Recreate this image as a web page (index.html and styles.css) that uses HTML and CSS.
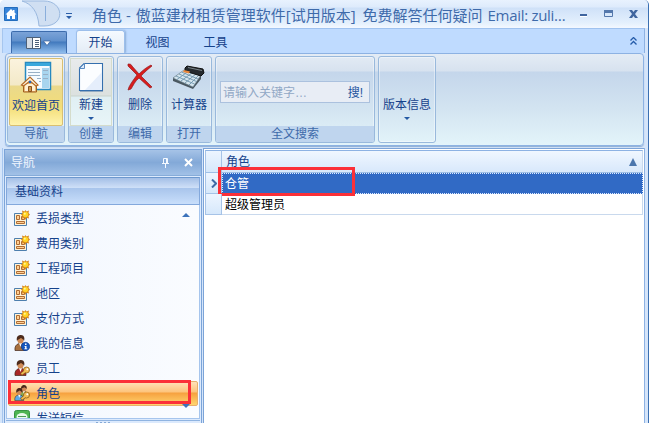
FILE: index.html
```html
<!DOCTYPE html>
<html lang="zh-CN">
<head>
    <meta charset="UTF-8">
    <title>角色</title>
    <link rel="stylesheet" href="styles.css">
</head>
<body>
    <!-- shared icons -->
    <svg class="defs">
        <symbol id="card" viewBox="0 0 16 16">
            <path fill="#fff3d6" stroke="#4d7fae" d="M.5 3.500h12v12H.5z"/>
            <path fill="#ffcf91" stroke="#b06c34" d="M2.500 5.500h3v4h-3zM7.500 6.500h3v3h-3z"/>
            <path fill="#ffcf91" stroke="#b06c34" d="M2.500 11.500h8v2h-8z"/>
            <path fill="#d98a1c" d="M11.500 0l1 1.500L15 .5l-.5 2.500L16 4.500l-1.500 1.500.5 2.500-2.500-.7L11.500 10l-1-2.200L8 8.500 8.500 6 7 4.500 8.500 3 8 .5l2.500 1z"/>
            <circle cx="11.500" cy="4.500" r="2.700" fill="#ffd322"/>
            <circle cx="10.800" cy="3.800" r="1" fill="#fff6a0"/>
        </symbol>
        <symbol id="person" viewBox="0 0 16 16">
            <path stroke="#40251a" stroke-width=".7" d="M1 15.500c-.5-4 1-6 4-7h3c3 1 4 3 4 7z"/>
            <path fill="#fff" d="M5 8l1.500 4L8 8z"/>
            <circle cx="6.500" cy="5.500" r="3" fill="#cf8a56"/>
            <path fill="#4b2a1c" d="M3 6C2 2 4 0 7 0s4 3 3 6C9.500 4 8 4 7 3 6 4 4 4 3 6z"/>
        </symbol>
        <symbol id="key" viewBox="0 0 16 16">
            <path fill="none" stroke="#8a5a18" stroke-width="3" d="M7 14.500l4-3"/>
            <circle cx="12.500" cy="10" r="3" fill="#f2bd56" stroke="#8a5a18" stroke-width=".8"/>
            <path stroke="#f2bd56" stroke-width="1.600" d="M7.500 14l4-3"/>
            <circle cx="13.300" cy="9.300" r="1" fill="#fff"/>
        </symbol>
    </svg>

    <div class="window">
        <div class="titlebar">
            <svg class="home" width="14" height="14" viewBox="0 0 14 14">
                <path fill="#3684da" stroke="#236dbd" d="M.5.500h13v13H.5z"/>
                <path fill="#fff" d="M7 2L1.500 7.500H3V12h3V9h2v3h3V7.500h1.500L10.500 5.500V3H9v1z"/>
            </svg>
            <svg class="quick" width="42" height="28" viewBox="0 0 42 28">
                <path class="quick-shape" d="M2 1h22c20 0 22 25 0 25h-5C18 12 12 4 2 1z"/>
                <path stroke="#8aaedb" d="M25.500 6v15"/>
            </svg>
            <svg class="quick-arrow" width="6" height="6" viewBox="0 0 6 6">
                <path fill="#2c5fa8" d="M0 0h6v1H0zM0 3h6L3 6z"/>
            </svg>
            <div class="caption"><span>角色 -</span><span class="app-name">傲蓝建材租赁管理软件[试用版本]</span><span class="answer">免费解答任何疑问</span><span class="email">Email: zuli…</span></div>
            <svg class="controls" width="60" height="12" viewBox="0 0 60 12">
                <path fill="#3f659f" d="M0 5h7v2H0z"/>
                <path fill="#fff" d="M0 7h7v1H0z"/>
                <path fill="none" stroke="#5478ac" d="M24.500 1.500h8v6h-8z"/>
                <path fill="#5478ac" d="M24 1h9v3h-9z"/>
                <path fill="#3f659f" d="M49 1h3l1.500 2L55 1h3l-3 4 3 4h-3l-1.500-2L52 9h-3l3-4z"/>
            </svg>
        </div>

        <div class="tabs">
            <div class="app-button">
                <svg width="26" height="12" viewBox="0 0 26 12">
                    <path fill="#fff" stroke="#4c6079" d="M.5.500h14v11H.5z"/>
                    <path fill="#d5dce5" d="M1 1h5v10H1z"/>
                    <path stroke="#4c6079" d="M6.500 0v12M9 3.500h4M9 5.500h4M9 7.500h4M9 9.500h4"/>
                    <path fill="#fff" stroke="#345d99" stroke-width=".7" d="M17.500 4h7L21 8.500z"/>
                </svg>
            </div>
            <div class="tab active">开始</div>
            <div class="tab">视图</div>
            <div class="tab">工具</div>
            <svg class="collapse" width="7" height="8" viewBox="0 0 7 8">
                <path fill="none" stroke="#245ba9" stroke-width="1.300" d="M.5 3.500l3-3 3 3M.5 7.500l3-3 3 3"/>
            </svg>
        </div>

        <div class="ribbon">
            <div class="group wide">
                <div class="command hot">
                    <svg width="32" height="32" viewBox="0 0 32 32">
                        <path fill="#f6fbff" stroke="#2689c0" stroke-width="1.500" d="M5.500 1.500h25v27h-25z"/>
                        <path fill="#39a8dc" d="M6 2h24v3H6z"/>
                        <path fill="#a8d5ef" d="M22 7h7v20h-7z"/>
                        <path stroke="#98b0c6" d="M8 8.500h12M8 11.500h12M8 14.500h12M17 17.500h4M19 20.500h2M23 9.500h5M23 13.500h5M23 17.500h5"/>
                        <path fill="#e9b875" stroke="#a15f21" d="M3.500 23v8h13v-8L10 17z"/>
                        <path fill="#fff0d2" d="M5 23h10v7H5z"/>
                        <path fill="#fff3dc" stroke="#b66c28" stroke-width="1.200" d="M1.500 24L10 16l8 8-2 1-6-5-6.500 5z"/>
                        <path fill="#d0984f" stroke="#8b521d" d="M8.500 25.500h3v5h-3z"/>
                        <circle cx="10" cy="21" r="1.300" fill="#2464c0"/>
                    </svg>
                    <span>欢迎首页</span>
                </div>
                <div class="group-name">导航</div>
            </div>
            <div class="group">
                <div class="command split">
                    <svg width="32" height="32" viewBox="0 0 32 32">
                        <path fill="#94abc2" d="M5 31h23v1H5z"/>
                        <path fill="#fbfdff" stroke="#356fae" stroke-width="1.100" d="M9 3.500h18.500v27h-23V8z"/>
                        <path fill="#dceafb" stroke="#5d8cc0" d="M9.500 3.500v5h-5z"/>
                        <path fill="#e5eefb" d="M27 12v18H10z"/>
                    </svg>
                    <span>新建</span>
                    <i class="arrow"></i>
                </div>
                <div class="group-name">创建</div>
            </div>
            <div class="group">
                <div class="command">
                    <svg width="32" height="32" viewBox="0 0 32 32">
                        <path fill="#d91c1c" stroke="#921b20" stroke-width=".7" d="M4 4c2 0 3 0 4 2l7 8c4-4 8-7 12-9l1 1c-4 3-8 7-11 10l11 11-2 1-11-10c-4 3-6 8-8 11l-3 1 1-3c2-4 5-8 8-12L4 6z"/>
                    </svg>
                    <span>删除</span>
                </div>
                <div class="group-name">编辑</div>
            </div>
            <div class="group">
                <div class="command">
                    <svg width="32" height="32" viewBox="0 0 32 32">
                        <path fill="#4a5861" d="M0 18l11-7 17 5v3l-8 10L0 21z"/>
                        <path fill="#d5e5ee" stroke="#617783" stroke-width=".6" d="M0 18l11-8 17 5-8 12z"/>
                        <path stroke="#6e94ab" stroke-width=".9" d="M3 16l18.500 8M6 14l17.500 7.500M8.500 12l16.500 7M4 19.500L15 11.500M8 21l11.500-8.500M12 23l11.500-9.500M16 25l10-10"/>
                        <path fill="#252a2e" stroke="#111" d="M12 8l2-2 16 3 1 4-3 3-16-5z"/>
                        <path stroke="#7b8489" d="M15 7.500l14 3"/>
                        <path fill="#e9863a" d="M11 10l6 1.500-1 2-6-1.500z"/>
                    </svg>
                    <span>计算器</span>
                </div>
                <div class="group-name">打开</div>
            </div>
            <div class="group search-group">
                <div class="command">
                    <div class="search"><span>请输入关键字…</span><b>搜!</b></div>
                </div>
                <div class="group-name">全文搜索</div>
            </div>
            <div class="group wide version">
                <span>版本信息</span>
                <i class="arrow"></i>
            </div>
        </div>

        <div class="content">
            <div class="nav">
                <div class="nav-title">
                    <span>导航</span>
                    <svg width="32" height="10" viewBox="0 0 32 10">
                        <path fill="none" stroke="#f4f9ff" d="M2.500 5V.5h4V5M5.500 1v4M1 5.500h7M4.500 6v4"/>
                        <path stroke="#fff" stroke-width="2" d="M24 1l7 7M31 1l-7 7"/>
                    </svg>
                </div>
                <div class="nav-group">基础资料</div>
                <div class="nav-list">
                    <div class="item"><svg><use href="#card"/></svg>丢损类型</div>
                    <div class="item"><svg><use href="#card"/></svg>费用类别</div>
                    <div class="item"><svg><use href="#card"/></svg>工程项目</div>
                    <div class="item"><svg><use href="#card"/></svg>地区</div>
                    <div class="item"><svg><use href="#card"/></svg>支付方式</div>
                    <div class="item">
                        <svg viewBox="0 0 16 16">
                            <use href="#person" fill="#a8703e"/>
                            <circle cx="11.500" cy="11.500" r="4.200" fill="#1456bd" stroke="#093784" stroke-width=".6"/>
                            <path fill="#fff" d="M11 8.500h1.500V10H11zM10.500 11h2v2.500h.8v.8h-3v-.8h.8v-1.700h-.6z"/>
                        </svg>我的信息
                    </div>
                    <div class="item">
                        <svg viewBox="0 0 16 16"><use href="#person" fill="#a92728"/><use href="#key"/></svg>员工
                    </div>
                    <div class="item selected">
                        <svg viewBox="0 0 16 16">
                            <use href="#person" x="5" y="0" width="12" height="12" fill="#86ad4d"/>
                            <use href="#person" x="0" y="3" width="13" height="13" fill="#5ca8e5"/>
                            <use href="#key"/>
                        </svg>角色
                        <div class="mark item-mark"></div>
                    </div>
                    <div class="item">
                        <svg viewBox="0 0 16 16">
                            <rect x=".5" y=".5" width="15" height="15" rx="2" fill="#4eb552" stroke="#369344"/>
                            <ellipse cx="8" cy="7" rx="5.500" ry="4" fill="#e9faeb"/>
                            <path stroke="#4c9b58" d="M4 6.500h8"/>
                        </svg>发送短信
                    </div>
                    <i class="scroll-up"></i>
                    <i class="scroll-down"></i>
                </div>
                <div class="nav-splitter"><i></i></div>
            </div>

            <div class="grid">
                <div class="row head">
                    <div class="indicator"></div>
                    <div class="cell">角色<i class="sort"></i></div>
                </div>
                <div class="row current">
                    <div class="indicator">
                        <svg width="6" height="9" viewBox="0 0 6 9"><path fill="none" stroke="#3e6aa5" stroke-width="2" d="M1 .5l4 4-4 4"/></svg>
                    </div>
                    <div class="cell">仓管</div>
                    <div class="mark row-mark"></div>
                </div>
                <div class="row">
                    <div class="indicator"></div>
                    <div class="cell">超级管理员</div>
                </div>
            </div>
        </div>
    </div>
</body>
</html>
```
FILE: styles.css
```css
* {
    box-sizing: border-box;
}
body {
    margin: 0;
    background: #fff;
    color: #15428b;
    font: 12px/16px "Liberation Sans", "Noto Sans CJK SC", sans-serif;
    overflow: hidden;
}
svg {
    display: block;
    flex: none;
}
.defs {
    display: none;
}
.window {
    width: 649px;
    height: 423px;
    display: flex;
    flex-direction: column;
    background: #d5e5fa;
    border-right: 1px solid #3b70b2;
    border-top-left-radius: 5px;
    border-top-right-radius: 5px;
    overflow: hidden;
}

/* title bar */
.titlebar {
    height: 28px;
    flex: none;
    display: flex;
    align-items: center;
    padding-left: 4px;
    background: linear-gradient(#e8f2fe 0, #deebfc 7px, #cfe1f8 8px, #e4f0fd 23px, #f3f8ff 100%);
}
.quick {
    margin-left: 2px;
}
.quick-shape {
    fill: #d0dff2;
    stroke: #9bb9df;
}
.quick-arrow {
    margin: 3px 0 0 4px;
}
.caption {
    width: 474px;
    margin-left: 20px;
    display: flex;
    color: #3e6aaa;
    font: 15px/22px "Open Sans", "Noto Sans CJK SC", sans-serif;
    white-space: nowrap;
    padding-top: 2px;
}
.app-name {
    margin-left: 5px;
}
.answer {
    margin-left: 7px;
}
.email {
    margin-left: 5px;
    letter-spacing: -0.3px;
}
.controls {
    margin: 2px 0 0 14px;
}

/* ribbon */
.tabs {
    height: 25px;
    flex: none;
    display: flex;
    align-items: flex-end;
    margin: 0 3px 0 2px;
    padding: 0 7px 0 8px;
    background: #bfdbff;
    border-top: 1px solid #9fc2ef;
    border-left: 1px solid #a6c6ef;
    border-right: 1px solid #8db2e3;
}
.app-button {
    width: 56px;
    height: 22px;
    margin-right: 9px;
    display: flex;
    align-items: center;
    justify-content: center;
    border: 1px solid #3c6cad;
    border-bottom: 0;
    border-radius: 2px 2px 0 0;
    background: linear-gradient(#7ba3d8 0, #6090cc 9px, #4179bd 10px, #8fbcec 100%);
}
.tab {
    width: 49px;
    height: 22px;
    margin-right: 9px;
    text-align: center;
    line-height: 24px;
}
.tab.active {
    height: 23px;
    margin-right: 8px;
    background: linear-gradient(#f5faff, #e4ecf6);
    border: 1px solid #9dbfeb;
    border-bottom: 0;
    border-radius: 3px 3px 0 0;
    box-shadow: 1px 0 2px #8caed8;
}
.collapse {
    margin: 0 0 8px auto;
}
.ribbon {
    width: 639px;
    height: 93px;
    flex: none;
    display: flex;
    gap: 3px;
    margin-left: 5px;
    padding: 2px 1px;
    border: 1px solid #8db2e3;
    border-radius: 4px;
    background: linear-gradient(#e4ecf5 0, #d7e2ef 17px, #c4d6eb 18px, #d3e4f1 55px, #e3f4fa 100%);
    box-shadow: 0 1px 1px #8eaed4;
}
.group {
    width: 46px;
    height: 87px;
    display: flex;
    flex-direction: column;
    border: 1px solid #99b9dc;
    border-radius: 3px;
    box-shadow: inset 0 0 0 1px #ffffff66;
}
.wide {
    width: 58px;
}
.search-group {
    width: 160px;
}
.command {
    flex: 1;
    display: flex;
    flex-direction: column;
    align-items: center;
    padding-top: 3px;
    white-space: nowrap;
}
.command span {
    margin-top: 5px;
}
.hot {
    margin: 1px 1px 0;
    padding-top: 2px;
    border: 1px solid #d9bf71;
    border-radius: 2px;
    background: linear-gradient(#fbf3de 0, #f3e9c8 26px, #ead98c 27px, #f3dd78 48px, #fff4ad 100%);
}
.split {
    margin: 1px 1px 0;
    padding-top: 1px;
    border: 1px solid #d5dccb;
    background: linear-gradient(#e8ebec 0, #dce1df 36px, #c8d3cd 37px, #e0eff3 38px, #e8f5f8 100%);
}
.arrow {
    width: 0;
    height: 0;
    border: 3px solid transparent;
    border-top-color: #2459a3;
    border-bottom: 0;
}
.split .arrow {
    margin-top: 4px;
}
.group-name {
    height: 16px;
    text-align: center;
    color: #3e6aaa;
    background: #bfd5ee;
    border-radius: 0 0 2px 2px;
    line-height: 17px;
}
.search {
    width: 150px;
    height: 22px;
    margin-top: 21px;
    display: flex;
    align-items: center;
    justify-content: space-between;
    padding: 2px 6px 0 2px;
    background: #e8edf5;
    border: 1px solid #abc1de;
    color: #91a8c5;
}
.search span {
    margin: 0;
}
.search b {
    font-weight: normal;
    color: #24569f;
}
.version {
    align-items: center;
    padding-top: 40px;
}
.version .arrow {
    margin-top: 4px;
}

/* navigation */
.content {
    flex: 1;
    min-height: 0;
    display: flex;
    margin: 2px 3px 0 2px;
    border-left: 1px solid #a6c6ef;
    border-right: 1px solid #8db2e3;
}
.nav {
    width: 198px;
    margin: 1px 1px 0 1px;
    display: flex;
    flex-direction: column;
    border: 1px solid #7ca4d8;
    border-bottom: 0;
    background: #dceafd;
}
.nav-title {
    height: 26px;
    flex: none;
    display: flex;
    align-items: center;
    justify-content: space-between;
    padding: 0 8px 0 6px;
    color: #f0f6ff;
    background: linear-gradient(#a6c3e7, #83a9d8 50%, #a2c1e7);
    border-bottom: 1px solid #86acd9;
}
.nav-group {
    height: 28px;
    flex: none;
    margin: 1px 1px 0;
    padding-left: 8px;
    line-height: 28px;
    background: linear-gradient(#a4bfe6, #cfe0f8 38%, #a9c5ec 40%, #c9dffb);
    border: 1px solid #83a8dc;
    border-top-color: #6d98ce;
}
.nav-list {
    position: relative;
    height: 214px;
    flex: none;
    margin: 0 1px;
    padding-top: 1px;
    overflow: hidden;
    background: linear-gradient(90deg, #f1f6fe, #fafcff);
    border: 1px solid #a6c5ed;
    border-top: 0;
}
.item {
    position: relative;
    height: 25px;
    display: flex;
    align-items: center;
    gap: 6px;
    padding-left: 7px;
}
.item svg {
    width: 16px;
    height: 16px;
    margin-bottom: 1px;
}
.item.selected {
    margin: 0 1px;
    padding-left: 5px;
    border: 1px solid #e8b06c;
    border-radius: 2px;
    background: linear-gradient(#ffe2b8 0, #fdc47c 10px, #f6a13f 11px, #ffd56f 100%);
}
.scroll-up, .scroll-down {
    position: absolute;
    right: 9px;
    width: 0;
    height: 0;
    border: 4px solid transparent;
}
.scroll-up {
    top: 8px;
    border-bottom-color: #3c73bb;
    border-top: 0;
}
.scroll-down {
    bottom: 10px;
    border-top-color: #3c73bb;
    border-bottom: 0;
}
.nav-splitter {
    flex: 1;
    margin: 1px 1px 0;
    padding-top: 1px;
    border-top: 1px solid #90b4e1;
}
.nav-splitter i {
    display: block;
    width: 14px;
    margin: 0 auto;
    border-top: 2px dotted #86aad7;
}

/* role table */
.grid {
    flex: 1;
    padding: 1px;
    background: #fff;
    border: 1px solid #7ca4d8;
    border-width: 1px 0 0 1px;
}
.row {
    position: relative;
    height: 21px;
    display: flex;
    color: #000;
}
.indicator {
    width: 17px;
    display: flex;
    align-items: center;
    justify-content: center;
    background: linear-gradient(#edf5ff, #d6e8fb);
    border: 1px solid #a6c3e7;
    border-width: 0 1px 1px;
}
.cell {
    flex: 1;
    padding-left: 3px;
    line-height: 23px;
    border-bottom: 1px solid #c9d9ed;
    border-right: 1px solid #c9d9ed;
}
.head {
    height: 23px;
}
.head .indicator, .head .cell {
    border-top: 1px solid #8db2e3;
    border-bottom-color: #9ebfe6;
}
.head .cell {
    display: flex;
    align-items: center;
    justify-content: space-between;
    padding: 2px 5px 0 4px;
    color: #15428b;
    background: linear-gradient(#f0f7ff, #d8e8fb);
}
.sort {
    width: 0;
    height: 0;
    margin-bottom: 2px;
    border: 4px solid transparent;
    border-bottom: 8px solid #4b76ad;
    border-top: 0;
}
.current .cell {
    padding-left: 2px;
    line-height: 21px;
    color: #fff;
    background: #316ac5;
    border: 1px dotted #dce9ff;
}

/* red highlight frames */
.mark {
    position: absolute;
    border: 3px solid #fb3038;
}
.item-mark {
    left: -1px;
    top: -2px;
    width: 183px;
    height: 24px;
}
.row-mark {
    left: 13px;
    top: -6px;
    width: 137px;
    height: 29px;
}
```
